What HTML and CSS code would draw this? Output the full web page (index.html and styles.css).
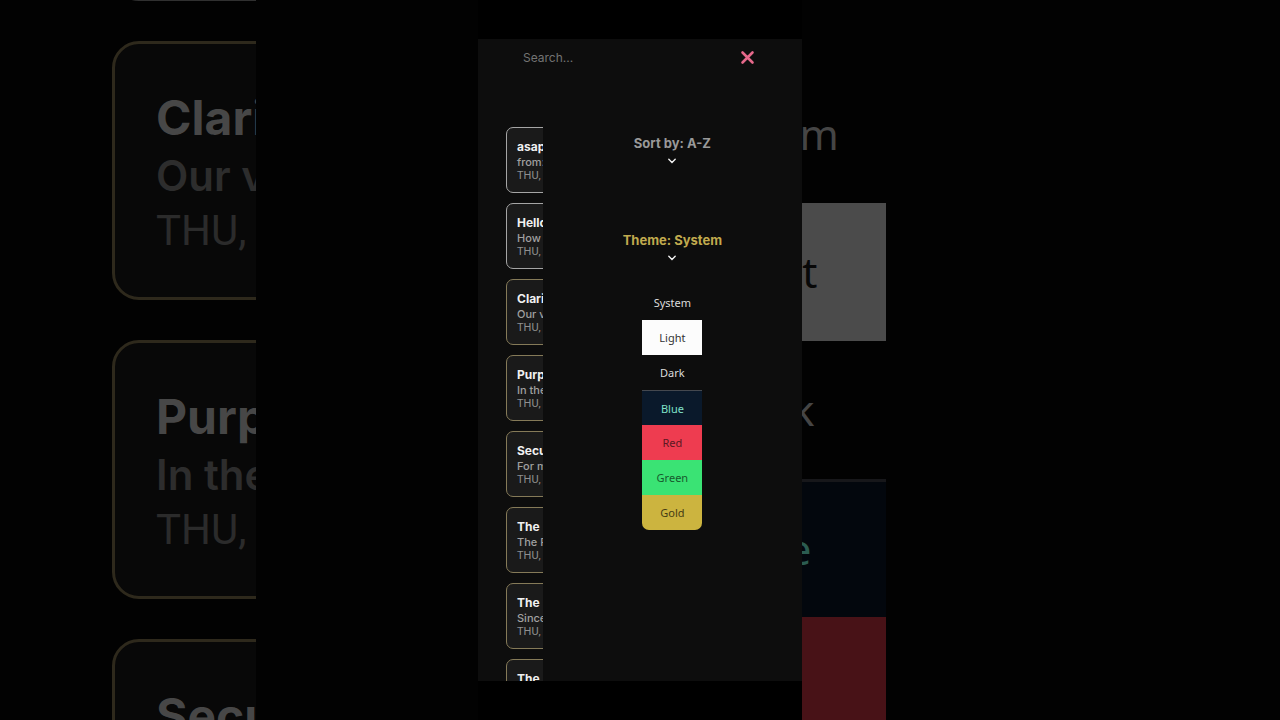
FILE: index.html
```
<!DOCTYPE html>
<html lang="en">
  <head>
    <meta charset="utf-8" />
    <title>Notes</title>
    <link rel="stylesheet" href="styles.css">
  </head>
  <body>
    <div class="stage">
      <div class="backdrop backdrop-left" aria-hidden="true">
        <div class="big-notes">
          <div class="big-note plain"></div>
          <div class="big-note">
            <div class="big-title">Clari</div>
            <div class="big-text">Our v</div>
            <div class="big-date">THU,</div>
          </div>
          <div class="big-note">
            <div class="big-title">Purp</div>
            <div class="big-text">In the</div>
            <div class="big-date">THU,</div>
          </div>
          <div class="big-note">
            <div class="big-title">Secu</div>
          </div>
        </div>
      </div>

      <main class="phone">
        <div class="screen">
          <header class="search-bar">
            <input type="text" id="search" aria-label="Search" placeholder="Search..." />
            <button class="close-button" aria-label="Close menu">
              <svg width="15" height="15" viewBox="0 0 15 15">
                <path d="M2.5 2.5 12.5 12.5M12.5 2.5 2.5 12.5" />
              </svg>
            </button>
          </header>

          <div class="content">
            <div class="notes">
              <article class="note plain">
                <h2>asap</h2>
                <p>from:</p>
                <time>THU,</time>
              </article>
              <article class="note plain">
                <h2>Hello</h2>
                <p>How</p>
                <time>THU,</time>
              </article>
              <article class="note">
                <h2>Clari</h2>
                <p>Our v</p>
                <time>THU,</time>
              </article>
              <article class="note">
                <h2>Purp</h2>
                <p>In the</p>
                <time>THU,</time>
              </article>
              <article class="note">
                <h2>Secu</h2>
                <p>For m</p>
                <time>THU,</time>
              </article>
              <article class="note">
                <h2>The</h2>
                <p>The F</p>
                <time>THU,</time>
              </article>
              <article class="note">
                <h2>The</h2>
                <p>Since</p>
                <time>THU,</time>
              </article>
              <article class="note">
                <h2>The</h2>
              </article>
            </div>

            <nav class="drawer">
              <button class="drawer-toggle sort">
                Sort by: A-Z
                <svg width="10" height="6" viewBox="0 0 10 6">
                  <path d="M1.8 1.2 5 4.4 8.2 1.2" />
                </svg>
              </button>
              <button class="drawer-toggle theme" aria-expanded="true">
                Theme: System
                <svg width="10" height="6" viewBox="0 0 10 6">
                  <path d="M1.8 1.2 5 4.4 8.2 1.2" />
                </svg>
              </button>
              <div class="theme-menu">
                <button class="option system">System</button>
                <button class="option light">Light</button>
                <button class="option dark">Dark</button>
                <button class="option blue">Blue</button>
                <button class="option red">Red</button>
                <button class="option green">Green</button>
                <button class="option gold">Gold</button>
              </div>
            </nav>
          </div>
        </div>
      </main>

      <div class="backdrop backdrop-right" aria-hidden="true">
        <div class="big-menu">
          <div class="big-option">System</div>
          <div class="big-option big-light">Light</div>
          <div class="big-option">Dark</div>
          <div class="big-option big-blue">Blue</div>
          <div class="big-option big-red"></div>
        </div>
      </div>
    </div>
  </body>
</html>
```
FILE: styles.css
```
* {
  box-sizing: border-box;
}
body {
  margin: 0;
  background-color: #020202;
  font-family: Inter, "Noto Sans", sans-serif;
}
h2,
p {
  margin: 0;
}
button {
  padding: 0;
  border: none;
  background: none;
  font-family: inherit;
  cursor: pointer;
}
svg {
  display: block;
  fill: none;
  stroke-linecap: round;
}
.stage {
  display: grid;
  grid-template-columns: minmax(0, 478fr) minmax(0, 324fr) minmax(0, 478fr);
  height: 100vh;
  overflow: hidden;
}

/* enlarged, dimmed copies on both sides */
.backdrop {
  overflow: hidden;
  white-space: nowrap;
}
.big-notes {
  display: flex;
  flex-direction: column;
  gap: 40px;
  width: 256px;
  margin-top: -258px;
  padding-left: 112px;
  overflow: hidden;
}
.big-note {
  flex: none;
  width: 400px;
  min-height: 259px;
  padding: 44px 41px 39px;
  border: 3px solid #2e291c;
  border-radius: 27px;
  background-color: #080808;
}
.big-note.plain {
  border-color: #303030;
}
.big-title {
  color: #474747;
  font-size: 48px;
  font-weight: 700;
  line-height: 60px;
}
.big-text {
  color: #2d2d2d;
  font-size: 42px;
  font-weight: 600;
  line-height: 56px;
}
.big-date {
  color: #2b2b2b;
  font-family: Roboto, sans-serif;
  font-size: 42px;
  line-height: 54px;
}
.big-menu {
  width: 237px;
  margin-top: 65px;
  margin-left: -153px;
}
.big-option {
  height: 138px;
  color: #454545;
  font-family: "Noto Sans", sans-serif;
  font-size: 42px;
  line-height: 138px;
  text-align: center;
}
.big-light {
  background-color: #4b4b4b;
  color: #080808;
}
.big-blue {
  border-top: 3px solid #17171a;
  background-color: #03070d;
  color: #2b5c50;
  line-height: 134px;
}
.big-red {
  background-color: #481217;
}

/* phone */
.phone {
  padding: 39px 0;
  background-color: #000;
  overflow: hidden;
}
.screen {
  display: flex;
  flex-direction: column;
  height: 100%;
  background-color: #0d0d0d;
  overflow: hidden;
}
.search-bar {
  display: flex;
  flex: none;
  align-items: center;
  justify-content: space-between;
  height: 36px;
  padding: 0 47px 0 45px;
}
#search {
  flex: 1;
  min-width: 0;
  padding: 0;
  border: none;
  outline: none;
  background: none;
  color: #ddd;
  font-family: inherit;
  font-size: 12px;
}
#search::placeholder {
  color: #737373;
  opacity: 1;
}
.close-button svg {
  stroke: #e5688a;
  stroke-width: 2.6;
}
.content {
  display: flex;
  flex: 1;
  min-height: 0;
}
.notes {
  display: flex;
  flex: none;
  flex-direction: column;
  gap: 10px;
  width: 20%;
  padding: 52px 0 0 28px;
  overflow: hidden;
  white-space: nowrap;
}
.note {
  flex: none;
  width: 264px;
  min-height: 66px;
  padding: 11px 10px 9px;
  border: 1px solid #857a58;
  border-radius: 7px;
  background-color: #1a1a1a;
}
.note.plain {
  border-color: #a5a5a5;
}
.note h2 {
  color: #f0f0f0;
  font-size: 12px;
  font-weight: 700;
  line-height: 16px;
}
.note p {
  color: #a0a0a0;
  font-size: 11px;
  font-weight: 500;
  line-height: 14px;
}
.note time {
  display: block;
  color: #8f8f8f;
  font-family: Roboto, sans-serif;
  font-size: 11px;
  line-height: 14px;
}
.drawer {
  display: flex;
  flex: 1;
  flex-direction: column;
  align-items: center;
  padding-top: 59px;
}
.drawer-toggle {
  display: flex;
  flex-direction: column;
  align-items: center;
  gap: 6px;
  font-size: 13px;
  font-weight: 700;
  line-height: 18px;
}
.drawer-toggle svg {
  stroke: #f2f2f2;
  stroke-width: 1.4;
}
.sort {
  color: #999;
}
.theme {
  margin-top: 67px;
  color: #c1aa4e;
}
.theme-menu {
  display: flex;
  flex-direction: column;
  width: 60px;
  margin-top: 24px;
  border-radius: 0 0 7px 7px;
  overflow: hidden;
}
.option {
  height: 35px;
  color: #dcdcdc;
  font-family: "Noto Sans", sans-serif;
  font-size: 11px;
}
.light {
  background-color: #fcfcfc;
  color: #333;
}
.blue {
  border-top: 1px solid #44484f;
  background-color: #0a192b;
  color: #7fe0c8;
}
.red {
  background-color: #ee3c50;
  color: #5c1822;
}
.green {
  background-color: #3ae374;
  color: #17592d;
}
.gold {
  background-color: #ccb43f;
  color: #463c14;
}
```
